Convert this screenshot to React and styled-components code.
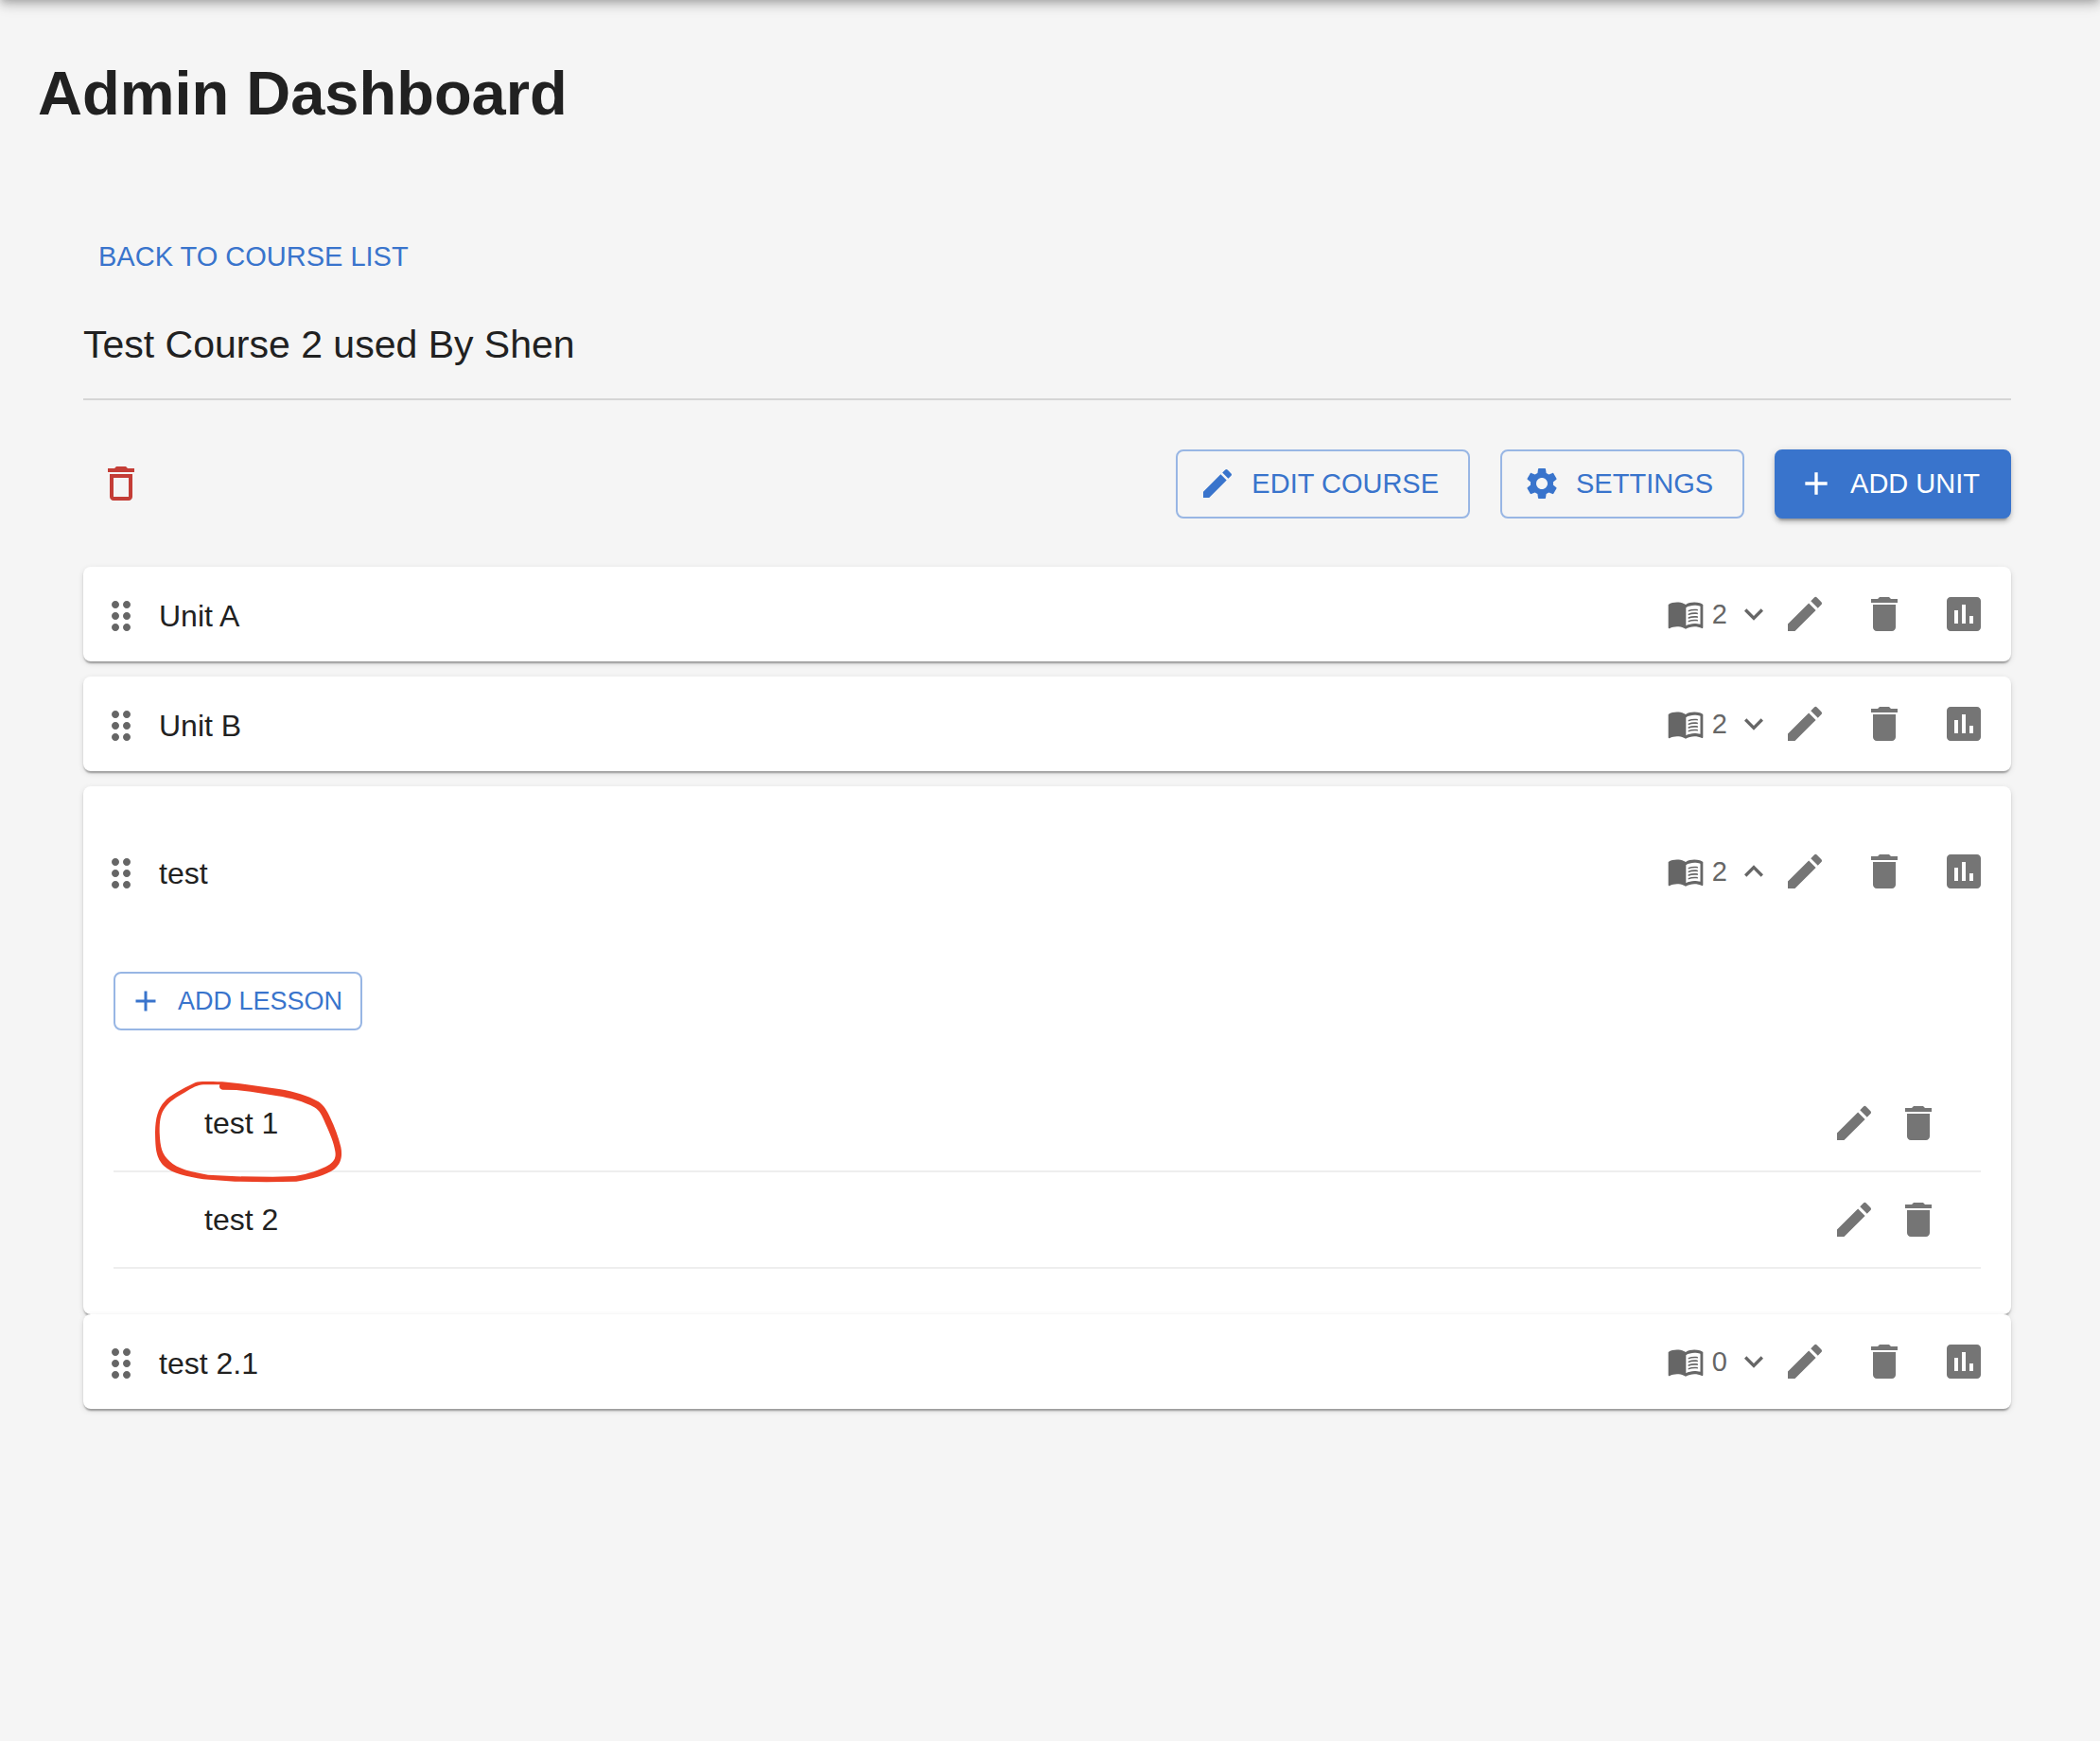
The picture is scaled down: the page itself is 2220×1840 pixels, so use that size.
import React, { useState } from "react";
import styled, { createGlobalStyle } from "styled-components";

const BLUE = "#3974cc";

const GlobalStyle = createGlobalStyle`
  *, *::before, *::after { box-sizing: border-box; }
  body {
    margin: 0;
    background: #f5f5f5;
    color: #212121;
    font-family: "Liberation Sans", Arial, Helvetica, sans-serif;
    font-size: 32px;
    line-height: 48px;
  }
  button { font-family: inherit; cursor: pointer; }
  ul { list-style: none; margin: 0; padding: 0; }
`;

const PATHS = {
  edit: ["M3 17.25V21h3.75L17.81 9.94l-3.75-3.75zM20.71 7.04c.39-.39.39-1.02 0-1.41l-2.34-2.34a.9959.9959 0 0 0-1.41 0l-1.83 1.83 3.75 3.75z"],
  trash: ["M6 19c0 1.1.9 2 2 2h8c1.1 0 2-.9 2-2V7H6zM19 4h-3.5l-1-1h-5l-1 1H5v2h14z"],
  trashOutline: ["M6 19c0 1.1.9 2 2 2h8c1.1 0 2-.9 2-2V7H6zM8 9h8v10H8zm7.5-5-1-1h-5l-1 1H5v2h14V4z"],
  settings: ["M19.14 12.94c.04-.3.06-.61.06-.94 0-.32-.02-.64-.07-.94l2.03-1.58c.18-.14.23-.41.12-.61l-1.92-3.32c-.12-.22-.37-.29-.59-.22l-2.39.96c-.5-.38-1.03-.7-1.62-.94l-.36-2.54c-.04-.24-.24-.41-.48-.41h-3.84c-.24 0-.43.17-.47.41l-.36 2.54c-.59.24-1.13.57-1.62.94l-2.39-.96c-.22-.08-.47 0-.59.22L2.74 8.87c-.12.21-.08.47.12.61l2.03 1.58c-.05.3-.09.63-.09.94s.02.64.07.94l-2.03 1.58c-.18.14-.23.41-.12.61l1.92 3.32c.12.22.37.29.59.22l2.39-.96c.5.38 1.03.7 1.62.94l.36 2.54c.05.24.24.41.48.41h3.84c.24 0 .44-.17.47-.41l.36-2.54c.59-.24 1.13-.56 1.62-.94l2.39.96c.22.08.47 0 .59-.22l1.92-3.32c.12-.22.07-.47-.12-.61zM12 15.6c-1.98 0-3.6-1.62-3.6-3.6s1.62-3.6 3.6-3.6 3.6 1.62 3.6 3.6-1.62 3.6-3.6 3.6"],
  add: ["M19 13h-6v6h-2v-6H5v-2h6V5h2v6h6z"],
  drag: ["M11 18c0 1.1-.9 2-2 2s-2-.9-2-2 .9-2 2-2 2 .9 2 2m-2-8c-1.1 0-2 .9-2 2s.9 2 2 2 2-.9 2-2-.9-2-2-2m0-6c-1.1 0-2 .9-2 2s.9 2 2 2 2-.9 2-2-.9-2-2-2m6 4c1.1 0 2-.9 2-2s-.9-2-2-2-2 .9-2 2 .9 2 2 2m0 2c-1.1 0-2 .9-2 2s.9 2 2 2 2-.9 2-2-.9-2-2-2m0 6c-1.1 0-2 .9-2 2s.9 2 2 2 2-.9 2-2-.9-2-2-2"],
  chart: ["M19 3H5c-1.1 0-2 .9-2 2v14c0 1.1.9 2 2 2h14c1.1 0 2-.9 2-2V5c0-1.1-.9-2-2-2M9 17H7v-7h2zm4 0h-2V7h2zm4 0h-2v-4h2z"],
  down: ["M7.41 8.59 12 13.17l4.59-4.58L18 10l-6 6-6-6z"],
  up: ["M7.41 15.41 12 10.83l4.59 4.58L18 14l-6-6-6 6z"],
  book: [
    "M21 5c-1.11-.35-2.33-.5-3.5-.5-1.95 0-4.05.4-5.5 1.5-1.45-1.1-3.55-1.5-5.5-1.5S2.45 4.9 1 6v14.65c0 .25.25.5.5.5.1 0 .15-.05.25-.05C3.1 20.45 5.05 20 6.5 20c1.95 0 4.05.4 5.5 1.5 1.35-.85 3.8-1.5 5.5-1.5 1.65 0 3.35.3 4.75 1.05.1.05.15.05.25.05.25 0 .5-.25.5-.5V6c-.6-.45-1.25-.75-2-1m.3 13.5c-1.1-.35-2.6-.5-3.8-.5-1.7 0-3.95.55-5.3 1.4V7.9c1.35-.85 3.6-1.4 5.3-1.4 1.2 0 2.7.15 3.8.5z",
    "M13.6 9.6c1.9-.8 4-1 6.1-.6v.95c-2.1-.35-4.2-.15-6.1.6z",
    "M13.6 11.8c1.9-.8 4-1 6.1-.6v.95c-2.1-.35-4.2-.15-6.1.6z",
    "M13.6 14c1.9-.8 4-1 6.1-.6v.95c-2.1-.35-4.2-.15-6.1.6z",
    "M13.6 16.2c1.9-.8 4-1 6.1-.6v.95c-2.1-.35-4.2-.15-6.1.6z",
  ],
};

const Svg = styled.svg`
  display: block;
  flex: none;
  width: ${(p) => p.$size}px;
  height: ${(p) => p.$size}px;
  fill: currentColor;
`;

const Icon = ({ name, size = 48 }) => (
  <Svg viewBox="0 0 24 24" $size={size} aria-hidden="true">
    {PATHS[name].map((d) => <path key={d} d={d} />)}
  </Svg>
);

const AppBar = styled.header`
  height: 128px;
  margin: -130px 0 2px;
  box-shadow: 0 4px 8px -2px rgba(0, 0, 0, 0.2), 0 8px 10px rgba(0, 0, 0, 0.14),
    0 2px 20px rgba(0, 0, 0, 0.12);
`;

const Page = styled.main`
  padding: 62px 46px 64px 40px;
`;

const PageTitle = styled.h1`
  margin: 0;
  font-size: 65px;
  line-height: 74px;
  font-weight: 700;
`;

const Course = styled.section`
  margin-top: 99px;
  padding: 0 48px;
`;

const TextButton = styled.button`
  display: block;
  border: 0;
  padding: 12px 16px;
  background: none;
  color: ${BLUE};
  font-size: 29px;
  line-height: 49px;
  text-transform: uppercase;
`;

const CourseTitle = styled.h2`
  margin: 32px 0 0;
  padding-bottom: 33px;
  border-bottom: 2px solid #d5d5d5;
  font-size: 41px;
  line-height: 48px;
  font-weight: 400;
`;

const Toolbar = styled.div`
  display: flex;
  align-items: center;
  justify-content: space-between;
  margin: 48px 0;
`;

const ToolbarGroup = styled.div`
  display: flex;
  gap: 32px;
`;

const Button = styled.button`
  display: inline-flex;
  align-items: center;
  gap: 16px;
  border: 2px solid ${(p) => (p.$filled ? BLUE : "#98b6e4")};
  border-radius: 8px;
  padding: ${(p) => (p.$small ? "6px 19px 6px 14px" : "10px 31px 10px 22px")};
  background: ${(p) => (p.$filled ? BLUE : "transparent")};
  color: ${(p) => (p.$filled ? "#fff" : BLUE)};
  font-size: ${(p) => (p.$small ? 27 : 29)}px;
  line-height: ${(p) => (p.$small ? 46 : 49)}px;
  text-transform: uppercase;
  box-shadow: ${(p) =>
    p.$filled
      ? "0 6px 2px -4px rgba(0,0,0,.2), 0 4px 4px rgba(0,0,0,.14), 0 2px 10px rgba(0,0,0,.12)"
      : "none"};
`;

const IconButton = styled.button`
  display: flex;
  border: 0;
  padding: ${(p) => (p.$roomy ? 16 : 0)}px;
  background: none;
  color: ${(p) => (p.$danger ? "#c43d36" : "#757575")};
`;

const UnitCard = styled.li`
  border-radius: 8px;
  background: #fff;
  box-shadow: 0 4px 2px -2px rgba(0, 0, 0, 0.2), 0 2px 2px rgba(0, 0, 0, 0.14),
    0 2px 6px rgba(0, 0, 0, 0.12);
  margin-bottom: ${(p) => (p.$open ? 0 : 16)}px;
`;

const UnitHeader = styled.div`
  display: flex;
  align-items: center;
  justify-content: space-between;
  height: ${(p) => (p.$open ? 180 : 100)}px;
  padding: 0 26px 0 16px;
`;

const UnitName = styled.div`
  display: flex;
  align-items: center;
  gap: 16px;
  padding-top: 4px;
`;

const DragHandle = styled.span`
  color: #666;
  cursor: grab;
`;

const UnitControls = styled.div`
  display: flex;
  align-items: center;
  gap: 10px;
`;

const Actions = styled.div`
  display: flex;
  gap: ${(p) => p.$gap}px;
`;

const CountButton = styled.button`
  display: flex;
  align-items: center;
  gap: 8px;
  border: 0;
  padding: 0;
  background: none;
  color: #666;
  font-size: 29px;
  line-height: 49px;
`;

const UnitBody = styled.div`
  padding: 16px 32px 48px;
`;

const LessonList = styled.ul`
  && { margin-top: 48px; }
`;

const Lesson = styled.li`
  position: relative;
  display: flex;
  align-items: center;
  justify-content: space-between;
  height: 102px;
  padding: 0 42px 0 96px;
  border-bottom: 2px solid #eee;
`;

const Marking = styled.svg`
  position: absolute;
  left: 35px;
  top: -2px;
  width: 216px;
  height: 120px;
  fill: #eb4025;
  pointer-events: none;
  z-index: 1;
`;

const HandCircle = () => (
  <Marking viewBox="0 0 648 360" aria-hidden="true">
    <path
      fillRule="evenodd"
      d="M155 27 C168 23 190 24 240 25 L290 30 L420 48 C470 56 510 68 545 88 C562 100 572 116 582 138 C597 170 608 198 616 232 C622 262 616 285 595 302 C570 320 520 334 475 341 L380 343 L280 341 L180 334 C130 326 80 316 55 292 C30 265 28 240 27 185 C28 140 35 110 58 86 C72 70 110 48 155 27 Z
         M232 34 L180 34 C160 35 148 43 120 59 C95 73 73 87 60 105 C43 127 41 150 41 185 C43 235 49 254 73 277 C96 301 145 312 195 320 L285 325 L400 326 L470 324 C515 316 550 305 580 287 C597 275 601 263 598 245 C594 220 582 190 568 160 C555 128 548 116 532 106 C500 88 455 76 415 70 L330 56 L285 51 L240 50 C230 48 230 40 232 34 Z"
    />
  </Marking>
);

const UNITS = [
  { name: "Unit A", lessons: 2 },
  { name: "Unit B", lessons: 2 },
  { name: "test", lessons: 2, open: true, items: [{ name: "test 1", marked: true }, { name: "test 2" }] },
  { name: "test 2.1", lessons: 0 },
];

function Unit({ unit }) {
  const [open, setOpen] = useState(Boolean(unit.open));
  return (
    <UnitCard $open={open}>
      <UnitHeader $open={open}>
        <UnitName>
          <DragHandle><Icon name="drag" /></DragHandle>
          <span>{unit.name}</span>
        </UnitName>
        <UnitControls>
          <CountButton type="button" aria-expanded={open} onClick={() => setOpen(!open)}>
            <Icon name="book" size={40} />
            {unit.lessons}
            <Icon name={open ? "up" : "down"} size={40} />
          </CountButton>
          <Actions $gap={36}>
            <IconButton type="button" aria-label="Edit unit"><Icon name="edit" /></IconButton>
            <IconButton type="button" aria-label="Delete unit"><Icon name="trash" /></IconButton>
            <IconButton type="button" aria-label="Unit statistics"><Icon name="chart" /></IconButton>
          </Actions>
        </UnitControls>
      </UnitHeader>
      {open && (
        <UnitBody>
          <Button type="button" $small><Icon name="add" size={36} />Add lesson</Button>
          <LessonList>
            {(unit.items || []).map((item) => (
              <Lesson key={item.name}>
                {item.marked && <HandCircle />}
                <span>{item.name}</span>
                <Actions $gap={20}>
                  <IconButton type="button" aria-label="Edit lesson"><Icon name="edit" /></IconButton>
                  <IconButton type="button" aria-label="Delete lesson"><Icon name="trash" /></IconButton>
                </Actions>
              </Lesson>
            ))}
          </LessonList>
        </UnitBody>
      )}
    </UnitCard>
  );
}

export default function App() {
  return (
    <>
      <GlobalStyle />
      <AppBar />
      <Page>
        <PageTitle>Admin Dashboard</PageTitle>
        <Course>
          <TextButton type="button">Back to course list</TextButton>
          <CourseTitle>Test Course 2 used By Shen</CourseTitle>
          <Toolbar>
            <IconButton type="button" aria-label="Delete course" $roomy $danger>
              <Icon name="trashOutline" />
            </IconButton>
            <ToolbarGroup>
              <Button type="button"><Icon name="edit" size={40} />Edit course</Button>
              <Button type="button"><Icon name="settings" size={40} />Settings</Button>
              <Button type="button" $filled><Icon name="add" size={40} />Add unit</Button>
            </ToolbarGroup>
          </Toolbar>
          <ul>
            {UNITS.map((unit) => <Unit key={unit.name} unit={unit} />)}
          </ul>
        </Course>
      </Page>
    </>
  );
}
